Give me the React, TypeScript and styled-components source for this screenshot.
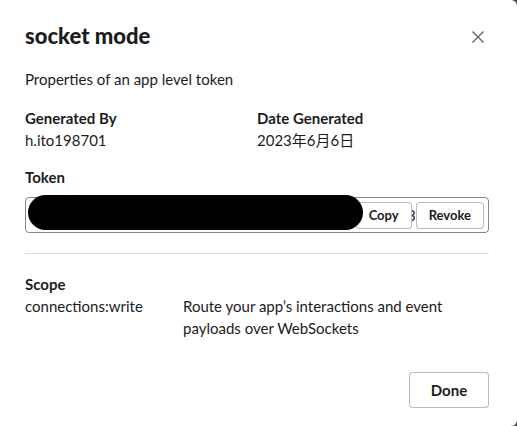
import styled, { createGlobalStyle } from "styled-components";

const Global = createGlobalStyle`
  html, body {
    margin: 0;
    padding: 0;
    background: #4a4a4a;
  }
  * {
    box-sizing: border-box;
  }
`;

const Modal = styled.div`
  width: 517px;
  height: 426px;
  background: #fff;
  border-top-right-radius: 6px;
  border-bottom-right-radius: 6px;
  padding: 0 28px 0 25px;
  font-family: Lato, "Noto Sans CJK JP", sans-serif;
  color: #1d1c1d;
  display: flex;
  flex-direction: column;
`;

const Header = styled.div`
  display: flex;
  align-items: center;
  justify-content: space-between;
  padding-top: 16px;
  height: 56px;
`;

const Title = styled.h1`
  margin: 0;
  font-size: 22px;
  font-weight: 900;
  line-height: 30px;
`;

const Close = styled.button`
  border: none;
  background: none;
  padding: 0;
  width: 14px;
  height: 14px;
  margin-right: 4px;
  margin-top: 2px;
  color: #616061;
  display: flex;
`;

const Text = styled.div`
  font-size: 15px;
  line-height: 22px;
`;

const Intro = styled(Text)`
  margin-top: 12px;
`;

const Label = styled(Text)`
  font-weight: 700;
`;

const Fields = styled.div`
  display: grid;
  grid-template-columns: 232px 1fr;
  margin-top: 17px;
`;

const Section = styled.div<{ $top: number }>`
  margin-top: ${(p) => p.$top}px;
`;

const TokenBox = styled.div`
  position: relative;
  margin-top: 9px;
  height: 36px;
  border: 1px solid #868686;
  border-radius: 4px;
  display: flex;
  align-items: center;
  justify-content: flex-end;
  padding: 0 4px 0 0;
`;

const Redacted = styled.div`
  position: absolute;
  z-index: 2;
  left: 2px;
  top: -3px;
  width: 335px;
  height: 35px;
  background: #000;
  border-radius: 18px;
`;

const Peek = styled.span`
  width: 4px;
  display: flex;
  justify-content: flex-end;
  font-size: 15px;
  color: #1d1c1d;
  white-space: nowrap;
`;

const SmallButton = styled.button`
  position: relative;
  z-index: 1;
  height: 27px;
  padding: 0 12px;
  border: 1px solid rgba(29, 28, 29, 0.3);
  border-radius: 4px;
  background: #fff;
  font-family: Lato, sans-serif;
  font-size: 13px;
  font-weight: 700;
  color: #1d1c1d;
`;

const Divider = styled.hr`
  margin: 20px 0 0;
  border: none;
  border-top: 1px solid #dddddd;
`;

const ScopeRow = styled.div`
  display: grid;
  grid-template-columns: 158px 1fr;
`;

const Footer = styled.div`
  display: flex;
  justify-content: flex-end;
  margin-top: 33px;
`;

const DoneButton = styled.button`
  height: 36px;
  min-width: 80px;
  padding: 0 16px;
  border: 1px solid rgba(29, 28, 29, 0.3);
  border-radius: 4px;
  background: #fff;
  font-family: Lato, sans-serif;
  font-size: 15px;
  font-weight: 700;
  color: #1d1c1d;
`;

export default function App() {
  return (
    <>
      <Global />
      <Modal>
        <Header>
          <Title>socket mode</Title>
          <Close aria-label="Close">
            <svg width="14" height="14" viewBox="0 0 14 14">
              <path d="M1.5 1.5l11 11M12.5 1.5l-11 11" stroke="currentColor" strokeWidth="1.3" />
            </svg>
          </Close>
        </Header>
        <Intro>Properties of an app level token</Intro>
        <Fields>
          <Label>Generated By</Label>
          <Label>Date Generated</Label>
          <Text>h.ito198701</Text>
          <Text>2023年6月6日</Text>
        </Fields>
        <Section $top={15}>
          <Label>Token</Label>
          <TokenBox>
            <SmallButton>Copy</SmallButton>
            <Peek>3</Peek>
            <SmallButton>Revoke</SmallButton>
            <Redacted />
          </TokenBox>
        </Section>
        <Divider />
        <Section $top={19}>
          <Label>Scope</Label>
          <ScopeRow>
            <Text>connections:write</Text>
            <Text>
              Route your app’s interactions and event
              <br />
              payloads over WebSockets
            </Text>
          </ScopeRow>
        </Section>
        <Footer>
          <DoneButton>Done</DoneButton>
        </Footer>
      </Modal>
    </>
  );
}
